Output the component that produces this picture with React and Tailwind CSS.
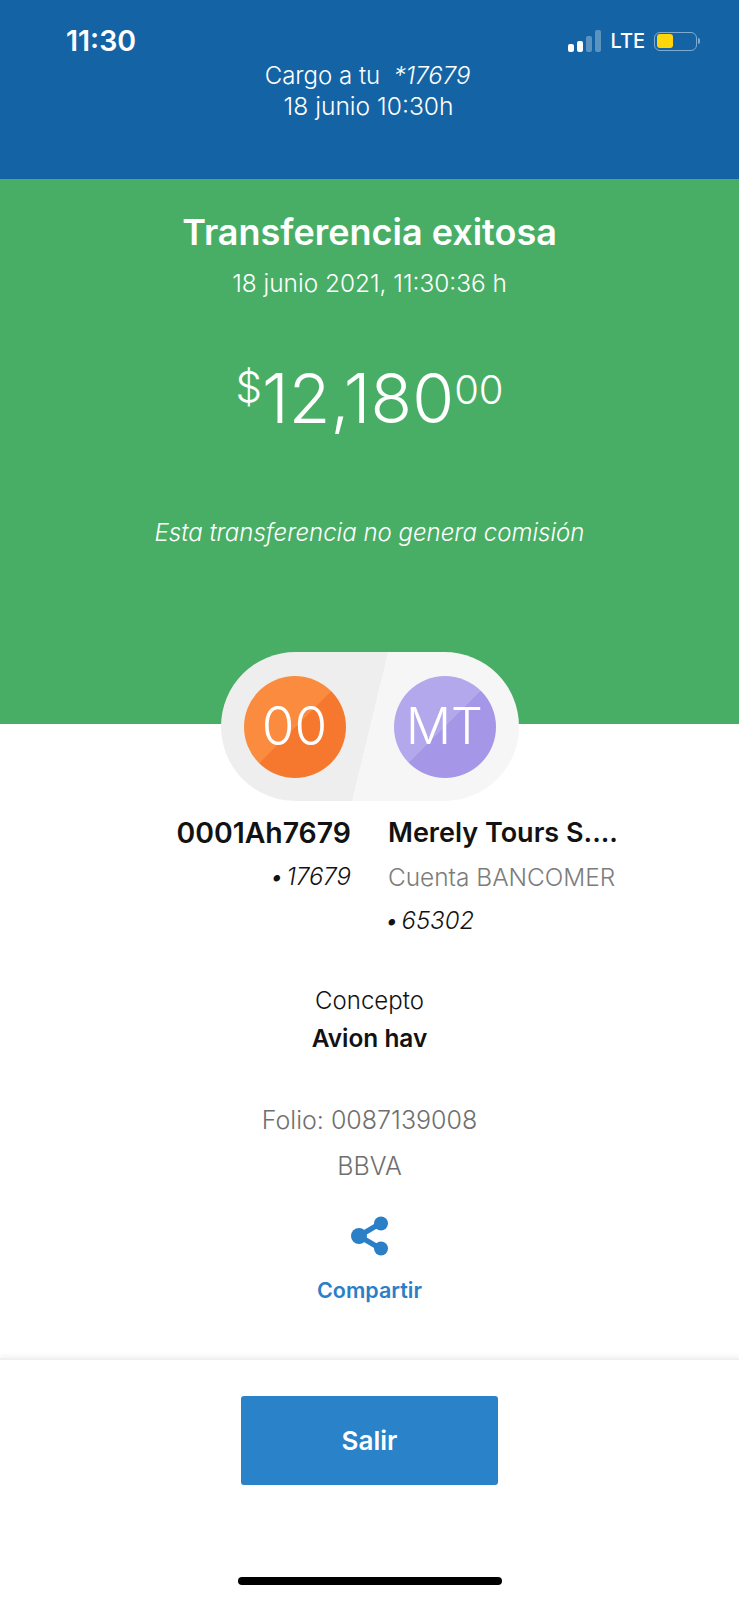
import React from 'react';

function StatusIcons() {
  return (
    <div className="flex items-center gap-[9px]">
      <svg width="33" height="23" viewBox="0 0 33 23" fill="#fff">
        <rect x="0" y="14" width="6" height="8" rx="2" />
        <rect x="9" y="11" width="6" height="11" rx="2" />
        <rect x="18" y="6" width="6" height="16" rx="2" opacity="0.3" />
        <rect x="27" y="0" width="6" height="22" rx="2" opacity="0.3" />
      </svg>
      <span className="text-[20px] leading-[24px] font-medium text-white">LTE</span>
      <div className="flex items-center">
        <div className="w-[43px] h-[19px] rounded-[6px] border border-[#7fabd0] p-[1.5px]">
          <div className="w-[16px] h-full rounded-[3px] bg-[#FFD60A]" />
        </div>
        <div className="w-[2px] h-[6px] ml-[1px] rounded-r bg-[#7fabd0]" />
      </div>
    </div>
  );
}

function Avatar({ label, className }) {
  return (
    <div className={`w-[102px] h-[102px] rounded-full flex items-center justify-center text-white font-light ${className}`}>
      {label}
    </div>
  );
}

function ShareIcon() {
  return (
    <svg width="38" height="40" viewBox="0 0 38 40" fill="#2A7FC6" stroke="#2A7FC6">
      <line x1="8" y1="20" x2="30" y2="7" strokeWidth="5.5" />
      <line x1="8" y1="20" x2="30" y2="33" strokeWidth="5.5" />
      <circle cx="8" cy="20" r="8" stroke="none" />
      <circle cx="30" cy="7.5" r="7" stroke="none" />
      <circle cx="30" cy="32.5" r="7" stroke="none" />
    </svg>
  );
}

export default function App() {
  return (
    <div className="w-[739px] h-[1600px] flex flex-col bg-white overflow-hidden font-['Inter',sans-serif]">
      <header className="h-[179px] bg-[#1464A5] text-white">
        <div className="flex items-center justify-between pl-[66px] pr-[39px] pt-[24px] h-[58px] mb-[3px]">
          <span className="text-[28.5px] leading-[34px] font-semibold">11:30</span>
          <StatusIcons />
        </div>
        <div className="text-center text-[24px] leading-[30px] font-light">
          <p className="pr-[4px]">Cargo a tu&nbsp; <em>*17679</em></p>
          <p className="pr-[2px] text-[24.6px]">18 junio 10:30h</p>
        </div>
      </header>

      <section className="h-[545px] bg-[#49AE65] text-white text-center pt-[29px]">
        <h1 className="text-[36px] leading-[48px] font-semibold">Transferencia exitosa</h1>
        <p className="mt-[13px] text-[24.4px] leading-[28px] font-light">18 junio 2021, 11:30:36 h</p>
        <p className="mt-[56px] flex justify-center items-start font-light">
          <span className="text-[42px] leading-[50px] mt-[9px]">$</span>
          <span className="text-[68px] leading-[90px]">12,180</span>
          <span className="text-[40px] leading-[50px] mt-[12px]">00</span>
        </p>
        <p className="mt-[75px] text-[24px] leading-[30px] font-light italic">Esta transferencia no genera comisión</p>
      </section>

      <div className="mt-[-72px] mx-auto w-[298px] h-[149px] rounded-[75px] flex items-center justify-between px-[23px] bg-[linear-gradient(103.6deg,#eeeeee_50%,#f6f6f6_50%)]">
        <Avatar label="00" className="text-[53px] bg-[linear-gradient(135deg,#FB8C3F_50%,#F6782F_50%)]" />
        <Avatar label="MT" className="text-[50px] bg-[linear-gradient(135deg,#B4A8EC_50%,#A596E8_50%)]" />
      </div>

      <div className="mt-[15px] grid grid-cols-2 gap-[37px]">
        <div className="text-right">
          <p className="text-[28.4px] leading-[34px] font-semibold text-[#121212]">0001Ah7679</p>
          <p className="mt-[10px] text-[24px] leading-[34px] font-light italic text-[#121212]">•<span className="ml-[3px]">17679</span></p>
        </div>
        <div>
          <p className="text-[27px] leading-[34px] font-semibold text-[#121212]">Merely Tours S....</p>
          <p className="mt-[10px] text-[24.4px] leading-[34px] font-light text-[#7c7c7c]">Cuenta BANCOMER</p>
          <p className="mt-[10px] -ml-[3px] text-[24px] leading-[34px] font-light italic text-[#121212]">•<span className="ml-[3px]">65302</span></p>
        </div>
      </div>

      <div className="mt-[46px] text-center">
        <p className="text-[24px] leading-[34px] font-light text-[#121212]">Concepto</p>
        <p className="mt-[3px] text-[24.4px] leading-[34px] font-semibold text-[#121212]">Avion hav</p>
      </div>

      <div className="mt-[48px] text-center text-[25px] font-light text-[#6f6f6f]">
        <p className="leading-[34px]">Folio: 0087139008</p>
        <p className="mt-[12px] leading-[34px]">BBVA</p>
      </div>

      <div className="mt-[33px] flex flex-col items-center">
        <ShareIcon />
        <p className="mt-[21px] text-[21.5px] leading-[26px] font-semibold text-[#2A7FC6]">Compartir</p>
      </div>

      <div className="mt-[55px] flex-1 flex flex-col items-center border-t-2 border-[#f0f0f0] shadow-[0_-3px_4px_#f6f6f6] pt-[36px]">
        <button className="w-[257px] h-[89px] rounded-[3px] bg-[#2A82C9] text-white text-[26px] font-semibold">Salir</button>
        <div className="mt-auto mb-[15px] w-[264px] h-[8px] rounded-full bg-black" />
      </div>
    </div>
  );
}
